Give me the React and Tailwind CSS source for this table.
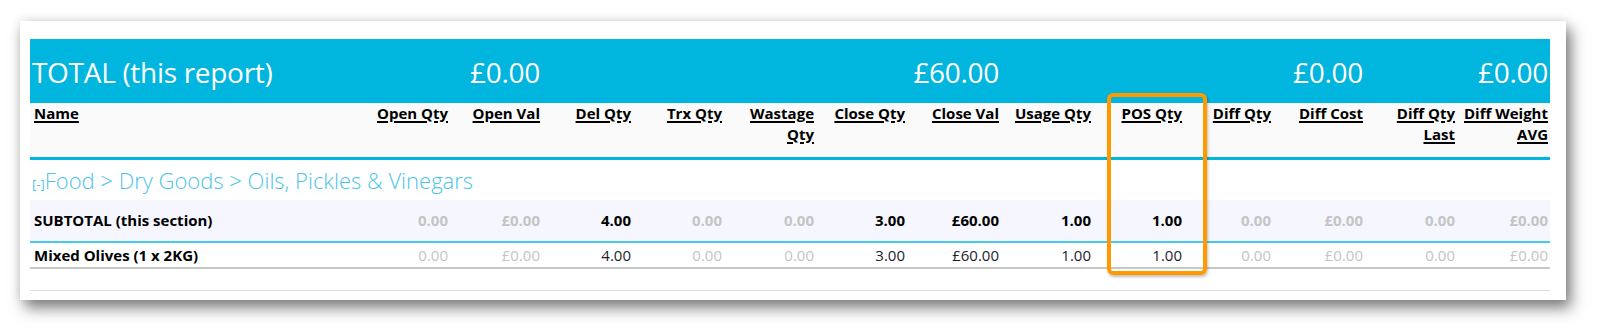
import React from "react";

const widths = [328, 92, 92, 91, 91, 92, 91, 94, 92, 91, 89, 92, 92, 93];
const headers = [
  "Name", "Open Qty", "Open Val", "Del Qty", "Trx Qty", "Wastage Qty", "Close Qty",
  "Close Val", "Usage Qty", "POS Qty", "Diff Qty", "Diff Cost", "Diff Qty Last", "Diff Weight AVG",
];
const band = ["TOTAL (this report)", "", "£0.00", "", "", "", "", "£60.00", "", "", "", "£0.00", "", "£0.00"];
// [value, muted]
const subtotal = [
  ["0.00", 1], ["£0.00", 1], ["4.00", 0], ["0.00", 1], ["0.00", 1], ["3.00", 0], ["£60.00", 0],
  ["1.00", 0], ["1.00", 0], ["0.00", 1], ["£0.00", 1], ["0.00", 1], ["£0.00", 1],
];

export default function App() {
  return (
    <div className="w-[1607px] h-[335px] bg-white pt-[21px] pl-[20px]" style={{ fontFamily: '"Open Sans", "Noto Sans", sans-serif' }}>
      <div className="relative w-[1546px] h-[279px] bg-white pt-[18px] pl-[10px] pr-[16px] shadow-[5px_8px_14px_rgba(0,0,0,0.5),0_0_10px_rgba(0,0,0,0.1)]">
        <table className="table-fixed border-collapse w-[1520px]">
          <colgroup>
            {widths.map((w, i) => (
              <col key={i} style={{ width: w }} />
            ))}
          </colgroup>
          <tbody>
            <tr className="bg-[#00b5de] h-[64px] text-white">
              {band.map((t, i) => (
                <td key={i} className={`${i === 0 ? "text-left pl-[2px]" : "text-right pr-[2px]"} text-[28px] font-normal whitespace-nowrap align-middle pt-[2px] tracking-[-0.3px]`}>
                  {t}
                </td>
              ))}
            </tr>
            <tr className="bg-[#fafafa] h-[55px] border-b-[3px] border-[#00b5de]">
              {headers.map((t, i) => (
                <td key={i} className={`${i === 0 ? "text-left pl-[4px]" : "text-right pr-[2px]"} align-top pt-0 text-[15px] leading-[21px] font-bold text-black`}>
                  <span className="underline underline-offset-2 decoration-[1.5px]">{t}</span>
                </td>
              ))}
            </tr>
            <tr className="h-[42px]">
              <td colSpan={14} className="align-middle pl-[2px] pt-[2px] text-[#4cc4e8] whitespace-nowrap">
                <span className="text-[13px]">[-]</span>
                <span className="text-[22px] font-light">Food &gt; Dry Goods &gt; Oils, Pickles &amp; Vinegars</span>
              </td>
            </tr>
            <tr className="h-[42px] bg-[#f6f7fe] border-b-[2px] border-[#45c9ec]">
              <td className="pl-[4px] text-[15px] font-bold text-black whitespace-nowrap">SUBTOTAL (this section)</td>
              {subtotal.map(([v, m], i) => (
                <td key={i} className={`text-right pr-[2px] text-[15px] font-bold ${m ? "text-[#c4c4c4]" : "text-black"}`}>
                  {v}
                </td>
              ))}
            </tr>
            <tr className="h-[26px] border-b-[2px] border-[#c8c8c8]">
              <td className="pl-[4px] text-[15px] font-bold text-black whitespace-nowrap">Mixed Olives (1 x 2KG)</td>
              {subtotal.map(([v, m], i) => (
                <td key={i} className={`text-right pr-[2px] text-[15px] font-normal ${m ? "text-[#c4c4c4]" : "text-[#1c1c2c]"}`}>
                  {v}
                </td>
              ))}
            </tr>
            <tr className="h-[22px] border-b border-[#dcdcdc]">
              <td colSpan={14}></td>
            </tr>
          </tbody>
        </table>
        <div className="absolute left-[1087px] top-[72px] w-[100px] h-[182px] border-[4px] border-[#ff9900] rounded-[6px] shadow-[1px_2px_3px_rgba(0,0,0,0.25)] pointer-events-none"></div>
      </div>
    </div>
  );
}
